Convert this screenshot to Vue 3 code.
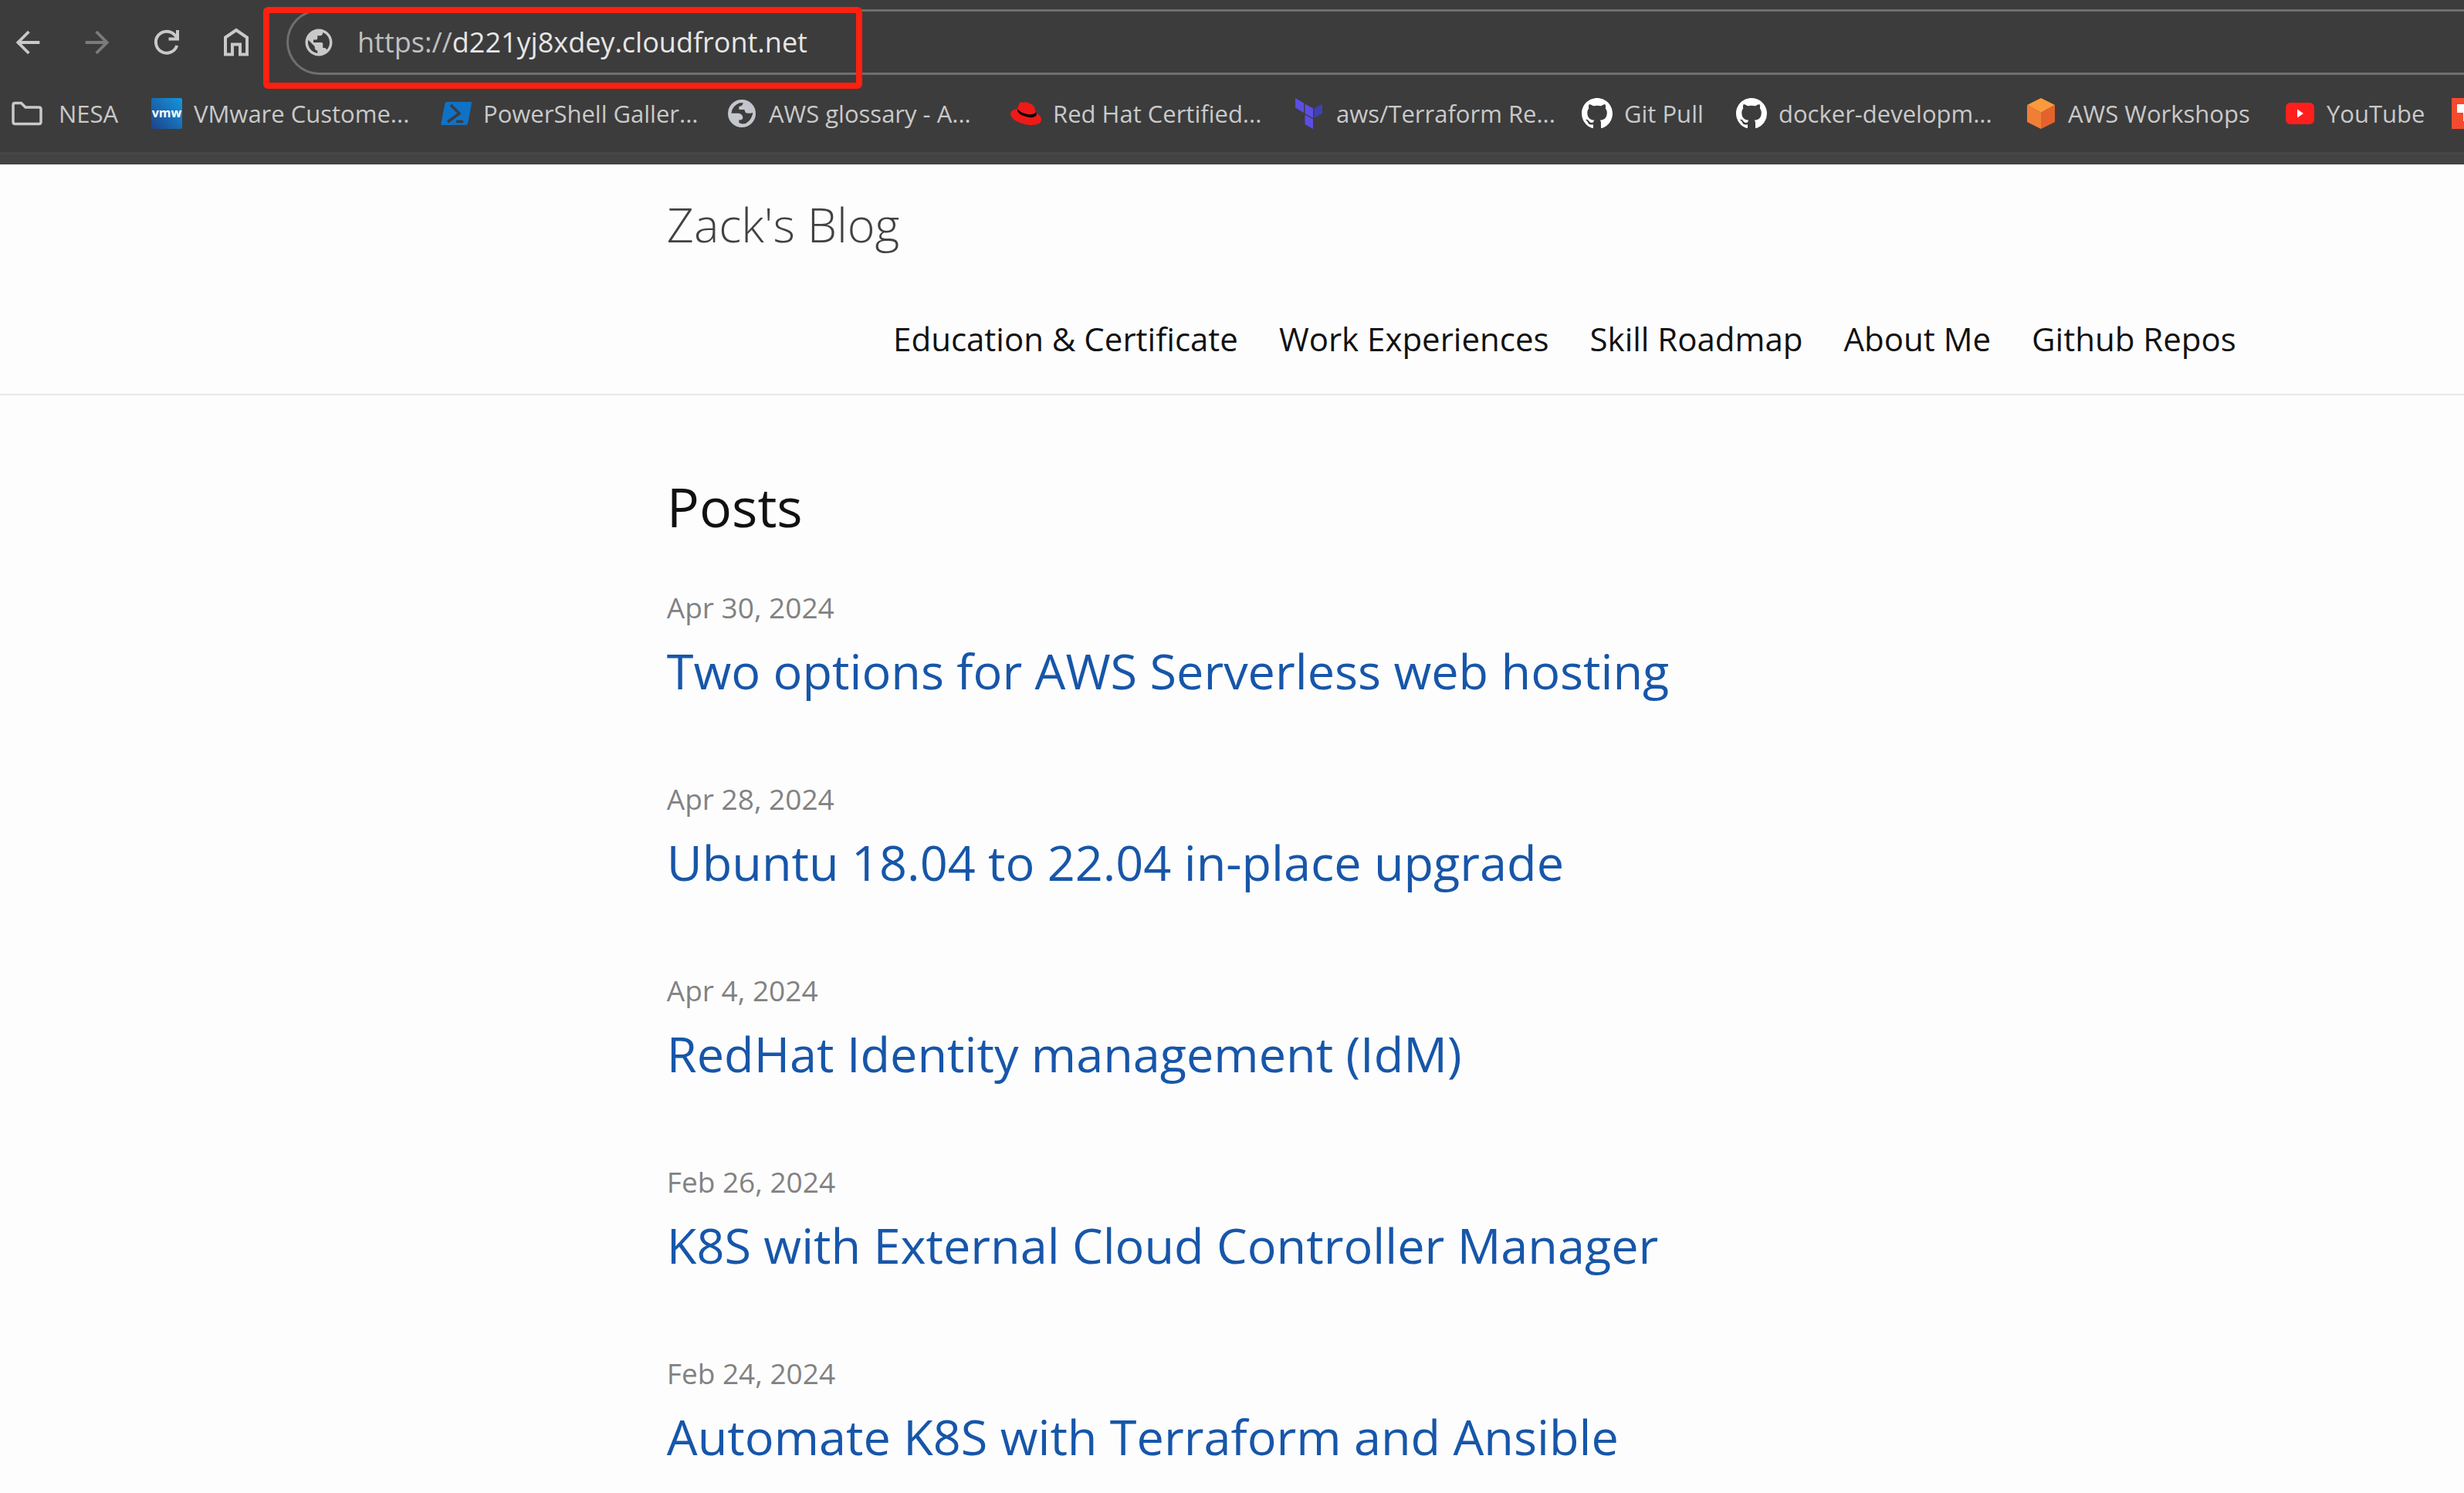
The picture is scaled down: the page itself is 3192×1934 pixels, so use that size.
<script setup>
const bookmarks = [
  { icon: 'folder', label: 'NESA' },
  { icon: 'vmw', label: 'VMware Custome...' },
  { icon: 'powershell', label: 'PowerShell Galler...' },
  { icon: 'globe', label: 'AWS glossary - A...' },
  { icon: 'redhat', label: 'Red Hat Certified...' },
  { icon: 'terraform', label: 'aws/Terraform Re...' },
  { icon: 'github', label: 'Git Pull' },
  { icon: 'github', label: 'docker-developm...' },
  { icon: 'cube', label: 'AWS Workshops' },
  { icon: 'youtube', label: 'YouTube' },
  { icon: 'tile', label: '' },
]

const pages = ['Education & Certificate', 'Work Experiences', 'Skill Roadmap', 'About Me', 'Github Repos']

const posts = [
  { date: 'Apr 30, 2024', title: 'Two options for AWS Serverless web hosting' },
  { date: 'Apr 28, 2024', title: 'Ubuntu 18.04 to 22.04 in-place upgrade' },
  { date: 'Apr 4, 2024', title: 'RedHat Identity management (IdM)' },
  { date: 'Feb 26, 2024', title: 'K8S with External Cloud Controller Manager' },
  { date: 'Feb 24, 2024', title: 'Automate K8S with Terraform and Ansible' },
]
</script>

<template>
  <div class="window">
    <div class="chrome">
      <div class="toolbar">
        <button class="tool" aria-label="Back">
          <svg viewBox="0 0 24 24"><path d="M20 11H7.83l5.59-5.59L12 4l-8 8 8 8 1.41-1.41L7.83 13H20v-2z" /></svg>
        </button>
        <button class="tool dim" aria-label="Forward">
          <svg viewBox="0 0 24 24"><path d="M4 11h12.17l-5.59-5.59L12 4l8 8-8 8-1.41-1.41L16.17 13H4v-2z" /></svg>
        </button>
        <button class="tool" aria-label="Reload">
          <svg viewBox="0 0 46 46"><path class="line" d="M36.2 27A14 14 0 1 1 33.5 13.500L37 17M37 7V18.500H25.500" /></svg>
        </button>
        <button class="tool" aria-label="Home">
          <svg viewBox="0 0 46 46"><path class="line" d="M9 16.500L23 7L37 16.500V38.500H28V25.500H18V38.500H9Z" /></svg>
        </button>
        <div class="address">
          <svg class="site" viewBox="0 0 24 24"><path d="M12 2C6.480 2 2 6.480 2 12s4.480 10 10 10 10-4.480 10-10S17.520 2 12 2zm-1 17.930c-3.950-.49-7-3.850-7-7.930 0-.62.08-1.210.21-1.790L9 15v1c0 1.100.9 2 2 2v1.930zm6.900-2.540c-.26-.81-1-1.390-1.900-1.390h-1v-3c0-.55-.45-1-1-1H8v-2h2c.55 0 1-.45 1-1V7h2c1.100 0 2-.9 2-2v-.41c2.930 1.190 5 4.060 5 7.410 0 2.080-.8 3.970-2.100 5.390z" /></svg>
          <label class="scheme" for="url">https://</label>
          <input id="url" class="url" type="text" value="d221yj8xdey.cloudfront.net" />
          <div class="highlight"></div>
        </div>
      </div>

      <nav class="bookmarks">
        <a v-for="(b, i) in bookmarks" :key="i" class="bookmark" :class="b.icon" href="#">
          <svg v-if="b.icon === 'folder'" class="icon" viewBox="0 0 40 40"><path d="M2 31V9Q2 6.500 4.500 6.500H12.500L18 12H35.500Q38 12 38 14.500V31Q38 33.500 35.500 33.500H4.500Q2 33.500 2 31Z" fill="none" stroke="#c9c9c9" stroke-width="3.500" /></svg>
          <svg v-else-if="b.icon === 'vmw'" class="icon" viewBox="0 0 40 40">
            <defs><linearGradient id="vmw" x1="0" y1="1" x2="1" y2="0"><stop offset="0" stop-color="#1d428a" /><stop offset="1" stop-color="#1497df" /></linearGradient></defs>
            <rect width="40" height="40" rx="2" fill="url(#vmw)" />
            <text x="20" y="25" text-anchor="middle" font-family="Open Sans, sans-serif" font-weight="700" font-size="16" fill="#fff">vmw</text>
          </svg>
          <svg v-else-if="b.icon === 'powershell'" class="icon" viewBox="0 0 40 40">
            <path d="M8 5H39Q40.500 5 40 7L35 33Q34.500 35 32.500 35H1.500Q0 35 .4 33L5.500 7Q6 5 8 5Z" fill="#1072c6" />
            <path d="M13 9L24 20L9 31M20 30.500H29" fill="none" stroke="#3c3c3c" stroke-width="3.500" />
          </svg>
          <svg v-else-if="b.icon === 'globe'" class="icon" viewBox="33 21 120 120">
            <circle cx="93" cy="81" r="54" fill="#c3c6cc" />
            <path d="M52 80Q56 50 85 40H98Q97 52 82 54V66H102Q106 68 106 76Q112 84 136 78Q132 106 108 120Q92 124 82 117V106Q97 108 97 96Q95 82 80 80Z" fill="#3c3c3c" />
          </svg>
          <svg v-else-if="b.icon === 'redhat'" class="icon" viewBox="0 0 40 40">
            <path d="M9 14Q1 15 0 20C0 29 16 35 28 35Q40 35 40 28Q40 23 33 19L31 12Q30 8 22 6Q20 4 17 6Q12 4 11 8Z" fill="#ee1a17" />
            <path d="M9 14Q8 21 20 24Q30 27 34 22L33 18Q31 22 22 21Q12 19 9 14Z" fill="#000" />
          </svg>
          <svg v-else-if="b.icon === 'terraform'" class="icon" viewBox="0 0 40 40">
            <path d="M2 0L13 6.500V19L2 12.500ZM14.500 7.500L25 13.500V26L14.500 20ZM14.500 21.500L25 27.500V40L14.500 34Z" fill="#5c4ee5" />
            <path d="M26.500 13.500L37 7.500V20L26.500 26Z" fill="#4040b2" />
          </svg>
          <svg v-else-if="b.icon === 'github'" class="icon" viewBox="0 0 16 16"><path fill="#fff" d="M8 0C3.580 0 0 3.580 0 8c0 3.540 2.290 6.530 5.470 7.590.4.07.55-.17.55-.38 0-.19-.01-.82-.01-1.490-2.010.37-2.530-.49-2.690-.94-.09-.23-.48-.94-.82-1.130-.28-.15-.68-.52-.01-.53.63-.01 1.080.58 1.230.82.72 1.210 1.870.87 2.330.66.07-.52.28-.87.51-1.070-1.780-.2-3.640-.89-3.640-3.950 0-.87.31-1.590.82-2.150-.08-.2-.36-1.020.08-2.120 0 0 .67-.21 2.200.82.64-.18 1.320-.27 2-.27s1.360.09 2 .27c1.530-1.040 2.200-.82 2.200-.82.44 1.100.16 1.920.08 2.120.51.56.82 1.270.82 2.150 0 3.070-1.870 3.750-3.650 3.950.29.25.54.73.54 1.480 0 1.070-.01 1.930-.01 2.200 0 .21.15.46.55.38A8.010 8.010 0 0 0 16 8c0-4.420-3.580-8-8-8z" /></svg>
          <svg v-else-if="b.icon === 'cube'" class="icon" viewBox="0 0 40 40">
            <path d="M20 0L38 9L20 19L2 9Z" fill="#fa9a3c" /><path d="M2 9L20 19V40L2 31Z" fill="#f07f36" /><path d="M38 9L20 19V40L38 31Z" fill="#e6622c" />
          </svg>
          <svg v-else-if="b.icon === 'youtube'" class="icon" viewBox="0 0 40 40"><rect x="2" y="6" width="37" height="28" rx="6" fill="#ff1f1c" /><path d="M17 14.500L25 20L17 25.500Z" fill="#fff" /></svg>
          <svg v-else class="icon" viewBox="0 0 40 40"><path d="M0 0H40V40H0Z" fill="#f44b2f" /><path d="M7 8H33V19H24V30H15V19H7Z" fill="#fff" /></svg>
          <span v-if="b.label">{{ b.label }}</span>
        </a>
      </nav>
    </div>

    <header class="site-header">
      <div class="wrapper">
        <a class="site-title" href="#">Zack's Blog</a>
        <nav class="site-nav">
          <a v-for="p in pages" :key="p" href="#">{{ p }}</a>
        </nav>
      </div>
    </header>

    <main class="wrapper content">
      <h1>Posts</h1>
      <ul class="posts">
        <li v-for="p in posts" :key="p.title">
          <time>{{ p.date }}</time>
          <h2><a href="#">{{ p.title }}</a></h2>
        </li>
      </ul>
    </main>
  </div>
</template>

<style>
body {
  margin: 0;
  background: #fdfdfd;
}
</style>

<style scoped>
.window {
  height: 100vh;
  overflow: hidden;
  background: #fdfdfd;
  color: #111;
  font-family: "Segoe UI", "Open Sans", "Noto Sans", sans-serif;
}
a {
  text-decoration: none;
}
.chrome {
  background: #3c3c3c;
  border-bottom: 3px solid #464646;
  overflow: hidden;
}
.toolbar {
  display: flex;
  align-items: center;
  gap: 44px;
  padding: 12px 0 0 13px;
}
.tool {
  flex: none;
  width: 46px;
  height: 46px;
  padding: 0;
  border: 0;
  background: none;
  color: #c9c9c9;
}
.tool svg {
  display: block;
  width: 46px;
  height: 46px;
  fill: currentColor;
}
.tool .line {
  fill: none;
  stroke: currentColor;
  stroke-width: 4;
}
.tool.dim {
  color: #7b7b7b;
}
.address {
  position: relative;
  display: flex;
  align-items: center;
  flex: 1;
  box-sizing: border-box;
  height: 85px;
  margin-left: -2px;
  padding-left: 18px;
  border: 3px solid #6f6f6f;
  border-right: 0;
  border-radius: 43px 0 0 43px;
  font-size: 36px;
}
.site {
  flex: none;
  width: 42px;
  height: 42px;
  margin-right: 29px;
  fill: #c9c9c9;
}
.scheme {
  color: #c0c0c0;
}
.url {
  flex: 1;
  padding: 0;
  border: 0;
  outline: 0;
  background: none;
  color: #e6e6e6;
  font: inherit;
}
.highlight {
  position: absolute;
  top: -6px;
  left: -33px;
  box-sizing: border-box;
  width: 776px;
  height: 106px;
  border: 8px solid #ff2010;
  border-radius: 6px;
  pointer-events: none;
}
.bookmarks {
  display: grid;
  grid-template-columns: 181px 375px 370px 368px 367px 373px 200px 375px 335px 217px 40px;
  height: 100px;
  padding-left: 15px;
}
.bookmark {
  display: flex;
  align-items: center;
  gap: 15px;
  height: 100px;
  color: #c9c9c9;
  font-size: 31px;
  white-space: nowrap;
}
.bookmark.folder {
  gap: 21px;
}
.icon {
  flex: none;
  width: 40px;
  height: 40px;
}
.site-header {
  border-top: 13px solid #424242;
  border-bottom: 2px solid #e8e8e8;
}
.wrapper {
  margin: 0 9% 0 27%;
  padding: 0 8px 0 2px;
}
.site-title {
  display: block;
  color: #424242;
  font-size: 61px;
  font-weight: 300;
  line-height: 155px;
}
.site-nav {
  display: flex;
  justify-content: flex-end;
  gap: 53px;
  font-size: 42px;
  line-height: 142px;
}
.site-nav a {
  color: #111;
}
.wrapper.content {
  padding-top: 72px;
}
h1 {
  margin: 0 0 29px;
  font-size: 70px;
  font-weight: 400;
  line-height: 144px;
}
.posts {
  margin: 0;
  padding: 0;
  list-style: none;
}
.posts li {
  margin-bottom: 84px;
}
time {
  display: block;
  color: #828282;
  font-size: 37px;
  line-height: 60px;
}
h2 {
  margin: 0;
  font-size: 63px;
  font-weight: 400;
  line-height: 104px;
}
h2 a {
  color: #1756a9;
}
</style>
